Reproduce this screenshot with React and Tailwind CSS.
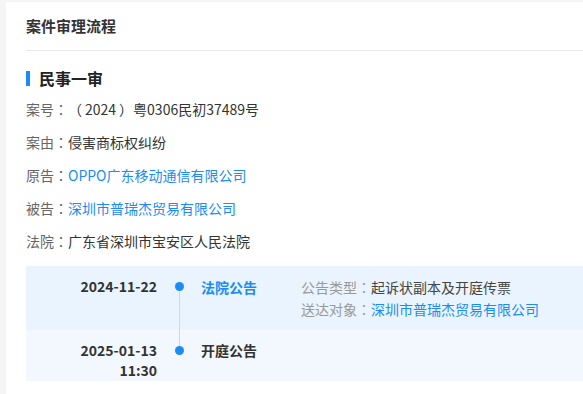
export default function App() {
  const font = { fontFamily: '"Noto Sans CJK SC", "Noto Sans", sans-serif' };
  const punct = { fontFamily: '"Noto Sans CJK TC", sans-serif' };

  const info = [
    { label: "案号", value: (<><span style={punct}>（</span><span className="px-[3px]">2024</span><span style={punct}>）</span>粤0306民初37489号</>) },
    { label: "案由", value: "侵害商标权纠纷" },
    { label: "原告", value: "OPPO广东移动通信有限公司", link: true },
    { label: "被告", value: "深圳市普瑞杰贸易有限公司", link: true },
    { label: "法院", value: "广东省深圳市宝安区人民法院" },
  ];

  return (
    <div className="w-[583px] h-[394px] bg-[#f5f5f5] pl-[6px] pt-[2px] overflow-hidden" style={font}>
      <div className="bg-white h-full pl-[20px]">
        {/* header */}
        <div className="h-[49px] flex items-center border-b border-[#e8e8e8]">
          <h1 className="text-[15px] font-bold text-[#333]">案件审理流程</h1>
        </div>

        {/* section title */}
        <div className="h-[24px] mt-[15px] flex items-center">
          <div className="w-[4px] h-[15px] bg-[#1a8cf5]"></div>
          <h2 className="ml-[9px] text-[16px] font-bold text-[#222]">民事一审</h2>
        </div>

        <div className="mt-[3px]">
          {info.map((row) => (
            <div key={row.label} className="h-[33px] flex items-center text-[14px]">
              <span className="text-[#666]">{row.label}<span style={punct}>：</span></span>
              <span className={row.link ? "text-[#1a8cf5]" : "text-[#333]"}>{row.value}</span>
            </div>
          ))}
        </div>

        {/* timeline */}
        <div className="mt-[8px] text-[14px]">
          <div className="flex h-[64px] bg-[#e9f4fe]">
            <div className="w-[131px] pt-[10px] text-right leading-[20px] font-bold text-[#333]">2024-11-22</div>
            <div className="w-[44px] flex flex-col items-center pt-[16px]">
              <div className="w-[9px] h-[9px] rounded-full bg-[#1a8cf5]"></div>
              <div className="w-px flex-1 bg-[#d6d6d6]"></div>
            </div>
            <div className="w-[100px] pt-[10px] leading-[22px] font-bold text-[#1a8cf5]">法院公告</div>
            <div className="pt-[10px] leading-[22px]">
              <div>
                <span className="text-[#999]">公告类型<span style={punct}>：</span></span>
                <span className="text-[#444]">起诉状副本及开庭传票</span>
              </div>
              <div>
                <span className="text-[#999]">送达对象<span style={punct}>：</span></span>
                <span className="text-[#1a8cf5]">深圳市普瑞杰贸易有限公司</span>
              </div>
            </div>
          </div>
          <div className="flex h-[51px] bg-[#f3f8fe]">
            <div className="w-[131px] pt-[10px] text-right leading-[20px] font-bold text-[#333]">
              <div>2025-01-13</div>
              <div>11:30</div>
            </div>
            <div className="w-[44px] flex flex-col items-center">
              <div className="w-px h-[16px] bg-[#d6d6d6]"></div>
              <div className="w-[9px] h-[9px] rounded-full bg-[#1a8cf5]"></div>
            </div>
            <div className="w-[100px] pt-[10px] leading-[20px] font-bold text-[#333]">开庭公告</div>
          </div>
        </div>
      </div>
    </div>
  );
}
